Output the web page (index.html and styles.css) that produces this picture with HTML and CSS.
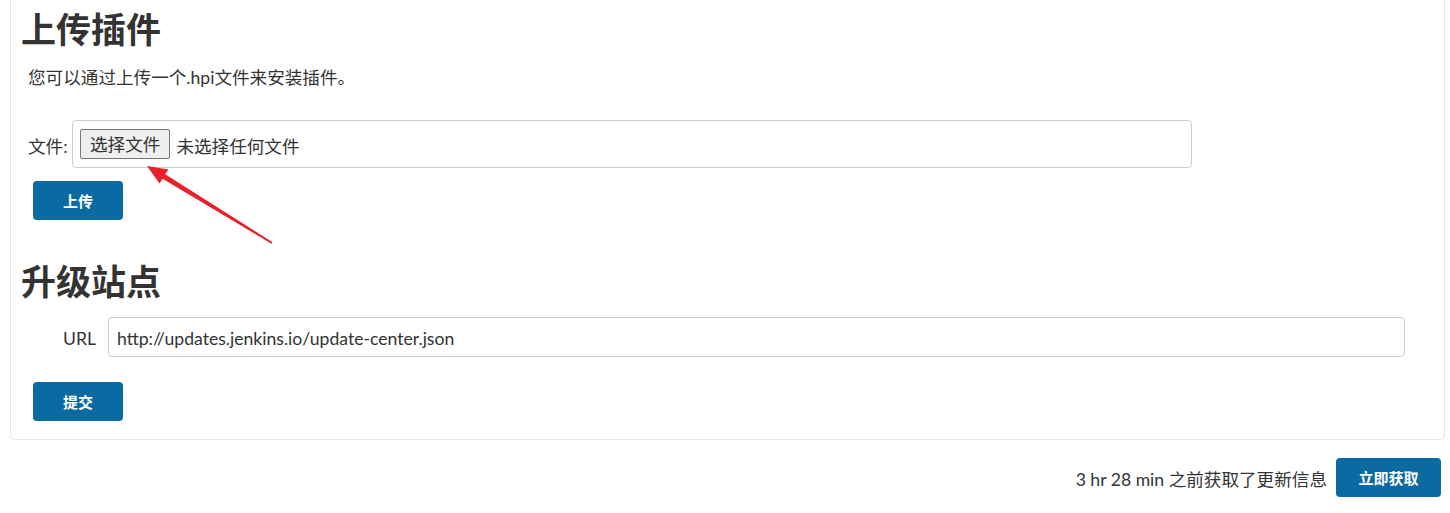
FILE: index.html
```html
<!DOCTYPE html>
<html lang="zh-CN">
<head>
<meta charset="utf-8">
<title>插件管理</title>
<link rel="stylesheet" href="styles.css">
</head>
<body>
<div class="panel">
  <h1 class="title">上传插件</h1>
  <p class="desc">您可以通过上传一个.hpi文件来安装插件。</p>
  <div class="file-row">
    <span class="file-label">文件:</span>
    <div class="file-box">
      <span class="file-btn">选择文件</span>
      <span class="file-none">未选择任何文件</span>
    </div>
  </div>
  <button class="btn btn-upload">上传</button>
  <h1 class="title title-2">升级站点</h1>
  <div class="url-row">
    <span class="url-label">URL</span>
    <div class="url-input">http://updates.jenkins.io/update-center.json</div>
  </div>
  <button class="btn btn-submit">提交</button>
</div>
<div class="footer-row">
  <span class="footer-text">3 hr 28 min 之前获取了更新信息</span>
  <button class="btn btn-fetch">立即获取</button>
</div>
<svg class="arrow" width="1450" height="513" viewBox="0 0 1450 513">
  <polygon points="147,166 168.5,169.5 165.2,174.3 272.5,242.2 271.5,243.8 162.6,178.7 159.5,183.5" fill="#e8202a"/>
</svg>
</body>
</html>
```
FILE: styles.css
```css
html, body {
  margin: 0;
  padding: 0;
  background: #fff;
}
body {
  position: relative;
  width: 1450px;
  height: 513px;
  overflow: hidden;
  font-family: Lato, "Noto Sans CJK SC", sans-serif;
  color: #333;
  font-size: 17.6px;
}
.panel {
  margin-left: 10px;
  width: 1433px;
  border: 1px solid #e6e6e6;
  border-top: none;
  border-radius: 0 0 5px 5px;
  padding-top: 5px;
  padding-bottom: 18px;
}
.title {
  margin: 0;
  padding-left: 10px;
  font-size: 35px;
  line-height: 46px;
  font-weight: 700;
  color: #333;
  font-family: "Noto Sans CJK SC", sans-serif;
}
.title-2 {
  margin-top: 37px;
}
.desc {
  margin: 14px 0 0 17px;
  line-height: 26px;
}
.file-row {
  margin-top: 29px;
  display: flex;
  align-items: center;
  padding-left: 17px;
}
.file-label {
  width: 44px;
  white-space: nowrap;
  padding-top: 2px;
}
.file-box {
  box-sizing: border-box;
  width: 1120px;
  height: 48px;
  border: 1px solid #ccc;
  border-radius: 4px;
  display: flex;
  align-items: center;
  padding-left: 7px;
}
.file-btn {
  box-sizing: border-box;
  height: 30px;
  padding: 1px 9px 0;
  line-height: 27px;
  background: #efefef;
  border: 1px solid #767676;
  border-radius: 2px;
  margin-right: 6px;
}
.file-none {
  padding-top: 2px;
}
.btn {
  display: block;
  box-sizing: border-box;
  height: 39px;
  border: none;
  border-radius: 4px;
  background: #0b6aa2;
  color: #fff;
  font-family: "Noto Sans CJK SC", sans-serif;
  font-weight: 700;
  font-size: 15px;
  padding: 0;
}
.btn-upload {
  width: 90px;
  margin: 13px 0 0 22px;
}
.url-row {
  margin-top: 14px;
  display: flex;
  align-items: center;
}
.url-label {
  width: 85px;
  text-align: right;
  margin-right: 12px;
  padding-top: 3px;
}
.url-input {
  box-sizing: border-box;
  width: 1297px;
  height: 40px;
  border: 1px solid #ccc;
  border-radius: 4px;
  padding: 3px 0 0 8px;
  line-height: 35px;
}
.btn-submit {
  width: 90px;
  margin: 25px 0 0 22px;
}
.footer-row {
  margin-top: 18px;
  display: flex;
  justify-content: flex-end;
  align-items: center;
  padding-right: 9px;
}
.footer-text {
  margin-right: 9px;
  padding-top: 2px;
}
.btn-fetch {
  width: 105px;
}
.arrow {
  position: absolute;
  left: 0;
  top: 0;
  pointer-events: none;
}
```
